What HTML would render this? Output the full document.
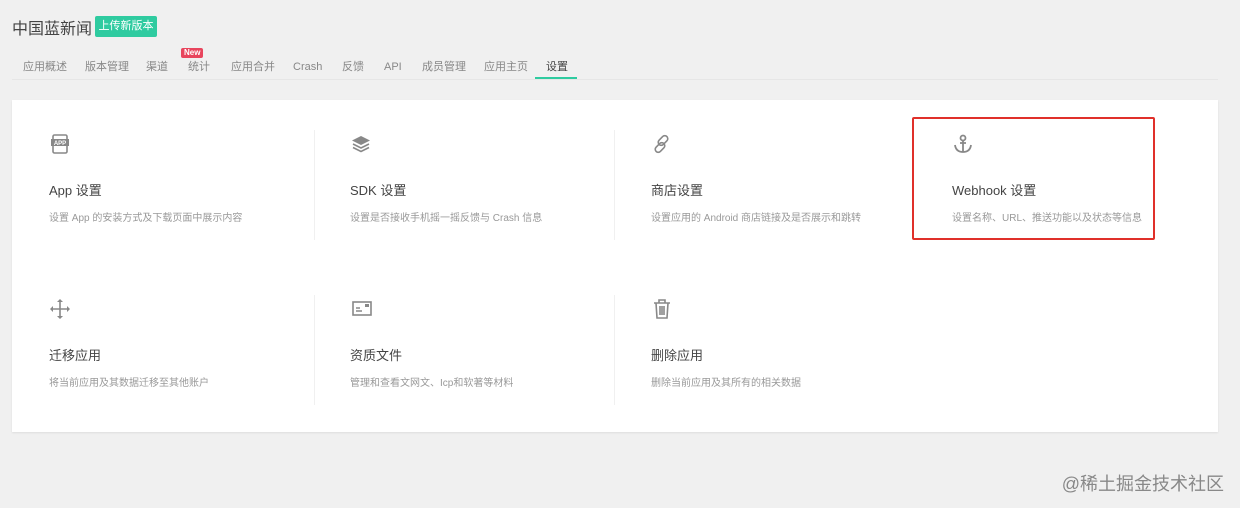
<!DOCTYPE html>
<html><head><meta charset="utf-8"><style>
body{margin:0;width:1240px;height:508px;background:#f0f0f0;font-family:"Liberation Sans","Noto Sans CJK SC",sans-serif;position:relative;overflow:hidden;color:#333}
.abs{position:absolute}
.title{left:12px;top:19px;font-size:16px;line-height:22px;color:#444}
.btn{left:95px;top:16px;width:62px;height:21px;background:#2fcba0;color:#fff;font-size:11px;line-height:21px;text-align:center;border-radius:2px}
.tabs{left:12px;top:57px;width:1206px;height:22px;border-bottom:1px solid #e6e6e6}
.tab{position:absolute;top:3px;font-size:11px;line-height:14px;color:#888;white-space:nowrap}
.new{left:181px;top:48px;background:#e8455d;color:#fff;font-size:8px;font-weight:bold;padding:0 3px;height:10px;line-height:10px;border-radius:2px}
.ul{left:535px;top:77px;width:42px;height:2px;background:#2fcba0}
.card{left:12px;top:100px;width:1206px;height:332px;background:#fff;box-shadow:0 1px 2px rgba(0,0,0,.08)}
.it{position:absolute;width:290px}
.it .h{position:absolute;top:32px;font-size:13px;line-height:18px;color:#444;white-space:nowrap}
.it .d{position:absolute;top:62px;font-size:10px;line-height:14px;color:#999;white-space:nowrap}
.it svg{position:absolute;top:-17px;left:0}
.vl{position:absolute;width:1px;background:#f0f0f0}
.red{left:912px;top:117px;width:239px;height:119px;border:2px solid #e0302a;border-radius:2px}
.wm{right:16px;top:470px;font-size:18px;color:#888}
</style></head><body>
<div class="abs title">中国蓝新闻</div>
<div class="abs btn">上传新版本</div>
<div class="abs tabs">
<span class="tab" style="left:11px">应用概述</span>
<span class="tab" style="left:73px">版本管理</span>
<span class="tab" style="left:134px">渠道</span>
<span class="tab" style="left:176px">统计</span>
<span class="tab" style="left:219px">应用合并</span>
<span class="tab" style="left:281px">Crash</span>
<span class="tab" style="left:330px">反馈</span>
<span class="tab" style="left:372px">API</span>
<span class="tab" style="left:410px">成员管理</span>
<span class="tab" style="left:472px">应用主页</span>
<span class="tab" style="left:534px;color:#444">设置</span>
</div>
<div class="abs new">New</div>
<div class="abs ul"></div>
<div class="abs card">
<div class="vl" style="left:302px;top:30px;height:110px"></div>
<div class="vl" style="left:602px;top:30px;height:110px"></div>
<div class="vl" style="left:302px;top:195px;height:110px"></div>
<div class="vl" style="left:602px;top:195px;height:110px"></div>

<div class="it" style="left:37px;top:50px">
<svg width="22" height="22" viewBox="0 0 22 22"><rect x="4" y="2" width="14" height="18" rx="1.5" fill="none" stroke="#888" stroke-width="1.6"/><rect x="2" y="6" width="18" height="7" fill="#888"/><text x="11" y="12" font-size="6" fill="#fff" text-anchor="middle" font-family="Liberation Sans" font-weight="bold">APP</text></svg>
<div class="h">App 设置</div><div class="d">设置 App 的安装方式及下载页面中展示内容</div></div>

<div class="it" style="left:338px;top:50px">
<svg width="22" height="22" viewBox="0 0 22 22"><path d="M11 3L20 7.5 11 12 2 7.5Z" fill="#888"/><path d="M3 11l8 4 8-4M3 14.5l8 4 8-4" fill="none" stroke="#888" stroke-width="1.6"/></svg>
<div class="h">SDK 设置</div><div class="d">设置是否接收手机摇一摇反馈与 Crash 信息</div></div>

<div class="it" style="left:639px;top:50px">
<svg width="22" height="22" viewBox="0 0 22 22"><g fill="none" stroke="#888" stroke-width="1.6"><rect x="9" y="2" width="6" height="11" rx="3" transform="rotate(45 12 7.5)"/><rect x="6" y="9" width="6" height="11" rx="3" transform="rotate(45 9 14.5)"/></g></svg>
<div class="h">商店设置</div><div class="d">设置应用的 Android 商店链接及是否展示和跳转</div></div>

<div class="it" style="left:940px;top:50px">
<svg width="22" height="22" viewBox="0 0 22 22"><g fill="none" stroke="#888" stroke-width="1.8"><circle cx="11" cy="5" r="2.5"/><path d="M11 7.5V19M3 12q1 7 8 7q7 0 8-7M8 10h6"/></g></svg>
<div class="h">Webhook 设置</div><div class="d">设置名称、URL、推送功能以及状态等信息</div></div>

<div class="it" style="left:37px;top:215px">
<svg width="22" height="22" viewBox="0 0 22 22"><g fill="none" stroke="#888" stroke-width="1.6"><path d="M11 2V20M2 11H20"/></g><path d="M11 1l3 3H8zM11 21l3-3H8zM1 11l3-3v6zM21 11l-3-3v6z" fill="#888"/></svg>
<div class="h">迁移应用</div><div class="d">将当前应用及其数据迁移至其他账户</div></div>

<div class="it" style="left:338px;top:215px">
<svg width="24" height="22" viewBox="0 0 24 22"><rect x="3" y="4" width="18" height="13" fill="none" stroke="#888" stroke-width="1.6"/><rect x="15" y="6" width="4" height="3" fill="#888"/><path d="M6 10h4M6 13h6" stroke="#888" stroke-width="1.4"/></svg>
<div class="h">资质文件</div><div class="d">管理和查看文网文、Icp和软著等材料</div></div>

<div class="it" style="left:639px;top:215px">
<svg width="22" height="22" viewBox="0 0 22 22"><g fill="none" stroke="#888" stroke-width="1.6"><path d="M3 5H19M8 5V2h6v3M5 5l1 15h10l1-15M9 8v9M11 8v9M13 8v9"/></g></svg>
<div class="h">删除应用</div><div class="d">删除当前应用及其所有的相关数据</div></div>
</div>
<div class="abs red"></div>
<div class="abs wm">@稀土掘金技术社区</div>
</body></html>
